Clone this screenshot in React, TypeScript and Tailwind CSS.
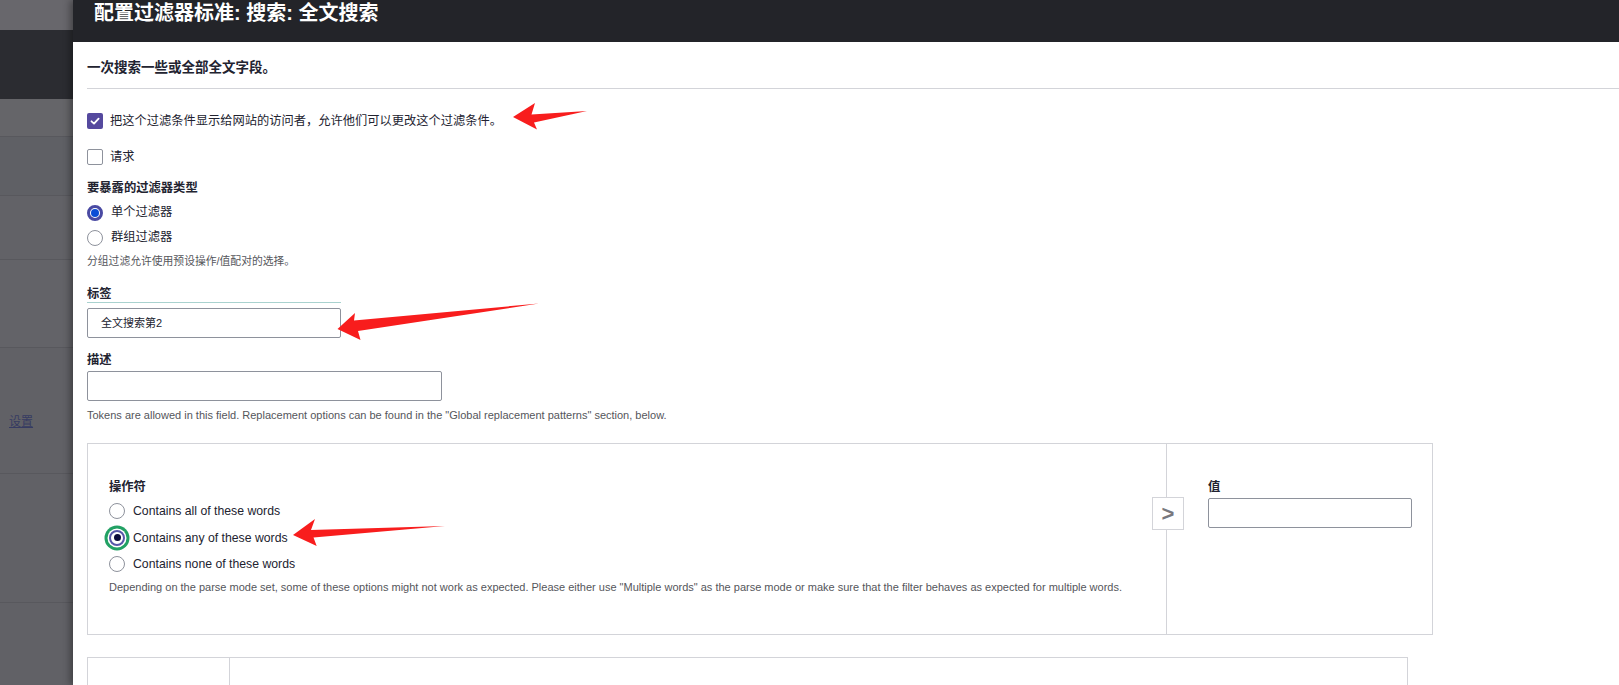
import React from "react";

function Checkbox({ checked }: { checked?: boolean }) {
  if (checked) {
    return (
      <span className="w-4 h-4 shrink-0 rounded-[2px] bg-[#55499e] flex items-center justify-center">
        <svg width="12" height="12" viewBox="0 0 12 12" fill="none">
          <path d="M2.5 6.3 L5 8.6 L9.6 3.6" stroke="#fff" strokeWidth="1.8" strokeLinecap="round" strokeLinejoin="round" />
        </svg>
      </span>
    );
  }
  return <span className="w-4 h-4 shrink-0 rounded-[2px] border border-[#8e929c] bg-white" />;
}

function Radio({ state }: { state?: "blue" | "focus" }) {
  if (state === "blue") {
    return (
      <span className="w-4 h-4 shrink-0 rounded-full border-[3px] border-[#4a4aa3] bg-white flex items-center justify-center">
        <span className="w-[8px] h-[8px] rounded-full bg-[#0b4dd6]" />
      </span>
    );
  }
  if (state === "focus") {
    return (
      <span className="w-4 h-4 shrink-0 rounded-full border-[2.5px] border-[#5656a8] bg-white flex items-center justify-center shadow-[0_0_0_1.5px_#ffffff,0_0_0_4.5px_#22a164]">
        <span className="w-[7px] h-[7px] rounded-full bg-[#0c0c3b]" />
      </span>
    );
  }
  return <span className="w-4 h-4 shrink-0 rounded-full border border-[#8e929c] bg-white" />;
}

export default function App() {
  return (
    <div className="relative w-[1619px] h-[685px] overflow-hidden bg-white flex font-[family-name:'Liberation_Sans','Noto_Sans_CJK_SC',sans-serif] text-[#222330]">
      <aside className="w-[73px] shrink-0 flex flex-col bg-[#636368]">
        <div className="h-[30px] shrink-0 bg-[#68676c]" />
        <div className="h-[69px] shrink-0 bg-[#2b2c31]" />
        <div className="h-[38px] shrink-0 bg-[#656569] border-b border-[#58585d]" />
        <div className="h-[59px] shrink-0 bg-[#5f6065] border-b border-[#58585d]" />
        <div className="h-[64px] shrink-0 bg-[#626267] border-b border-[#58585d]" />
        <div className="h-[88px] shrink-0 bg-[#636368] border-b border-[#58585d]" />
        <div className="h-[126px] shrink-0 bg-[#616166] border-b border-[#58585d] pl-[9px] pt-[61px]">
          <span className="text-[12px] leading-[18px] underline text-[#363b62]">设置</span>
        </div>
        <div className="h-[129px] shrink-0 bg-[#616166] border-b border-[#58585d]" />
        <div className="flex-1 bg-[#616166]" />
      </aside>

      <main className="relative z-10 flex-1 flex flex-col bg-white shadow-[-3px_0_7px_rgba(0,0,0,0.35)]">
        <header className="h-[42px] shrink-0 bg-[#232429] pl-[21px] pt-[1px] text-white text-[20px] leading-[24px] font-bold">
          配置过滤器标准: 搜索: 全文搜索
        </header>

        <div className="pl-[14px] flex flex-col">
          <div className="pt-[16px] pb-[10px] border-b border-[#d3d4d9] text-[13.5px] leading-[20px] font-semibold">
            一次搜索一些或全部全文字段。
          </div>

          <div className="mt-[22px] h-[20px] flex items-center gap-[7px] text-[12.25px]">
            <Checkbox checked />
            <span>把这个过滤条件显示给网站的访问者，允许他们可以更改这个过滤条件。</span>
          </div>
          <div className="mt-[16px] h-[20px] flex items-center gap-[7px] text-[12.25px]">
            <Checkbox />
            <span>请求</span>
          </div>

          <div className="mt-[11px] h-[20px] leading-[20px] text-[12.3px] font-semibold">要暴露的过滤器类型</div>
          <div className="mt-[2px] h-[25px] flex items-center gap-[8px] text-[12.25px]">
            <Radio state="blue" />
            <span>单个过滤器</span>
          </div>
          <div className="h-[25px] flex items-center gap-[8px] text-[12.25px]">
            <Radio />
            <span>群组过滤器</span>
          </div>
          <div className="mt-[3px] text-[10.8px] leading-[16px] text-[#55565b]">分组过滤允许使用预设操作/值配对的选择。</div>

          <div className="mt-[15px] w-[254px] h-[19px] leading-[20px] border-b border-[#a9d2cf] text-[12.3px] font-semibold">标签</div>
          <div className="mt-[5px] w-[254px] h-[30px] rounded-[2px] border border-[#8e929c] pl-[13px] flex items-center text-[11px]">
            全文搜索第2
          </div>

          <div className="mt-[12px] h-[20px] leading-[20px] text-[12.3px] font-semibold">描述</div>
          <div className="mt-[1px] w-[355px] h-[30px] rounded-[2px] border border-[#8e929c]" />
          <div className="mt-[6px] text-[11px] leading-[16px] text-[#55565b]">
            Tokens are allowed in this field. Replacement options can be found in the "Global replacement patterns" section, below.
          </div>

          <div className="relative mt-[20px] w-[1346px] h-[192px] border border-[#d3d4d9] flex">
            <div className="w-[1079px] h-full border-r border-[#d3d4d9] pl-[21px] pt-[33px]">
              <div className="h-[20px] leading-[20px] text-[12.3px] font-semibold">操作符</div>
              <div className="mt-[1px] flex flex-col text-[12.25px]">
                <div className="h-[26.5px] flex items-center gap-[8px]">
                  <Radio />
                  <span>Contains all of these words</span>
                </div>
                <div className="h-[26.5px] flex items-center gap-[8px]">
                  <Radio state="focus" />
                  <span>Contains any of these words</span>
                </div>
                <div className="h-[26.5px] flex items-center gap-[8px]">
                  <Radio />
                  <span>Contains none of these words</span>
                </div>
              </div>
              <div className="mt-[1px] text-[11px] leading-[16px] text-[#55565b]">
                Depending on the parse mode set, some of these options might not work as expected. Please either use "Multiple words" as the parse mode or make sure that the filter behaves as expected for multiple words.
              </div>
            </div>
            <div className="flex-1 pl-[41px] pt-[33px]">
              <div className="h-[20px] leading-[20px] text-[12.3px] font-semibold">值</div>
              <div className="mt-[1px] w-[204px] h-[30px] rounded-[2px] border border-[#8e929c]" />
            </div>
            <div className="absolute left-[1064px] top-[53px] w-[32px] h-[33px] border border-[#d3d4d9] bg-white flex items-center justify-center text-[22px] font-bold leading-none text-[#78787e]">
              &gt;
            </div>
          </div>

          <div className="mt-[22px] w-[1321px] h-[60px] border border-[#d3d4d9] flex">
            <div className="w-[142px] h-full border-r border-[#d3d4d9]" />
            <div className="flex-1" />
          </div>
        </div>
      </main>

      <svg className="absolute inset-0 z-20 pointer-events-none" width="1619" height="685" viewBox="0 0 1619 685">
        <polygon points="513,117 535,103 531.5,114.5 587,111 534,122.5 537,129.5" fill="#f81d1d" />
        <polygon points="337.5,329 355,313 354,320.5 539,303.5 358,331 360.5,340" fill="#f81d1d" />
        <polygon points="293,535 315,519 311,530 445,526 313.5,537.5 316.7,546" fill="#f81d1d" />
      </svg>
    </div>
  );
}
